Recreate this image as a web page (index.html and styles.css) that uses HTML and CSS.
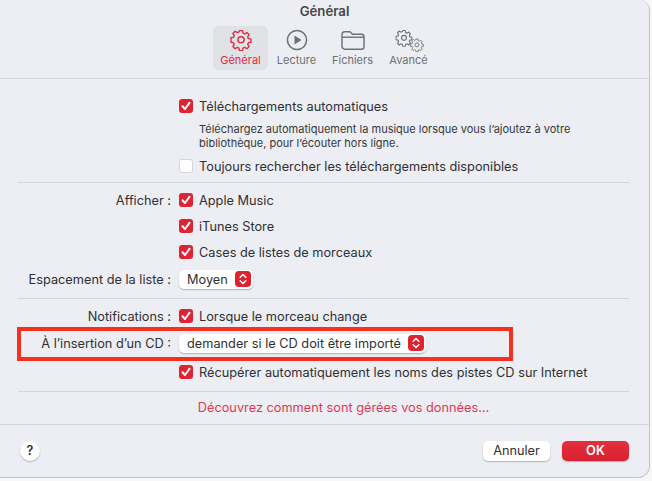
FILE: index.html
```html
<!doctype html>
<html lang="fr">
<head>
<meta charset="utf-8">
<title>Général</title>
<link rel="stylesheet" href="styles.css">
</head>
<body>
<div class="window">
  <h1 class="title">Général</h1>
  <nav class="tabs">
    <div class="tab active">
      <svg width="24" height="24" viewBox="0 0 24 24" fill="none" stroke="currentColor" stroke-width="1.5" stroke-linejoin="round">
        <symbol id="gear" viewBox="0 0 24 24"><path d="M10.300 1.800h3.400l.5 2.800 1.900.8 2.400-1.600 2.400 2.400-1.600 2.400.8 1.900 2.800.5v3.400l-2.800.5-.8 1.900 1.600 2.400-2.400 2.400-2.400-1.600-1.900.8-.5 2.800h-3.400l-.5-2.800-1.900-.8-2.400 1.600-2.400-2.400 1.600-2.400-.8-1.900-2.800-.5V9.600l2.800-.5.8-1.900L3.100 4.800l2.400-2.400 2.400 1.600 1.900-.8z"/><circle cx="12" cy="11.800" r="3.400"/></symbol>
        <use href="#gear" x="1" y="1" width="22" height="22"/>
      </svg>
      <span>Général</span>
    </div>
    <div class="tab">
      <svg width="24" height="24" viewBox="0 0 24 24" fill="none" stroke="currentColor" stroke-width="1.5"><circle cx="12" cy="12" r="9.600"/><path d="M9.500 7.600v8.800l7-4.400z" fill="currentColor" stroke="none"/></svg>
      <span>Lecture</span>
    </div>
    <div class="tab">
      <svg width="26" height="24" viewBox="0 0 26 24" fill="none" stroke="currentColor" stroke-width="1.400" stroke-linejoin="round"><path d="M2 6.500C2 4.600 3 3.700 4.500 3.700h5.500l2.500 2.500h9c1.600 0 2.500 1 2.500 2.500v10c0 1.600-.9 2.500-2.500 2.500h-17C3 20.700 2 19.800 2 18.200z"/><path d="M2 9.200h22"/></svg>
      <span>Fichiers</span>
    </div>
    <div class="tab">
      <svg width="30" height="24" viewBox="0 0 30 24" fill="none" stroke="currentColor" stroke-width="1.500" stroke-linejoin="round">
        <use href="#gear" x="1.250" y="1.250" width="17.500" height="17.500"/>
        <use href="#gear" x="16" y="10" width="14" height="14"/>
      </svg>
      <span>Avancé</span>
    </div>
  </nav>
  <hr class="rule rule-full">

  <section class="group group-top">
    <div class="row">
      <div class="label"></div>
      <label class="check on">Téléchargements automatiques</label>
    </div>
    <div class="row row-desc">
      <div class="label"></div>
      <p class="desc">Téléchargez automatiquement la musique lorsque vous l’ajoutez à votre bibliothèque, pour l’écouter hors ligne.</p>
    </div>
    <div class="row">
      <div class="label"></div>
      <label class="check">Toujours rechercher les téléchargements disponibles</label>
    </div>
  </section>
  <hr class="rule">

  <section class="group group-show">
    <div class="row">
      <div class="label">Afficher :</div>
      <label class="check on">Apple Music</label>
    </div>
    <div class="row">
      <div class="label"></div>
      <label class="check on">iTunes Store</label>
    </div>
    <div class="row">
      <div class="label"></div>
      <label class="check on">Cases de listes de morceaux</label>
    </div>
    <div class="row row-spacing">
      <div class="label">Espacement de la liste :</div>
      <div class="select">Moyen<span class="stepper"><svg width="8" height="12" viewBox="0 0 8 12" fill="none" stroke="#fff" stroke-width="1.500" stroke-linecap="round" stroke-linejoin="round"><path d="M1.200 4.300 4 1.500l2.800 2.800M1.200 7.700 4 10.500l2.800-2.800"/></svg></span></div>
    </div>
  </section>
  <hr class="rule">

  <section class="group group-cd">
    <div class="row">
      <div class="label">Notifications :</div>
      <label class="check on">Lorsque le morceau change</label>
    </div>
    <div class="row row-spacing">
      <div class="label">À l’insertion d’un CD :</div>
      <div class="select">demander si le CD doit être importé<span class="stepper"><svg width="8" height="12" viewBox="0 0 8 12" fill="none" stroke="#fff" stroke-width="1.500" stroke-linecap="round" stroke-linejoin="round"><path d="M1.200 4.300 4 1.500l2.800 2.800M1.200 7.700 4 10.500l2.800-2.800"/></svg></span></div>
    </div>
    <div class="row row-last">
      <div class="label"></div>
      <label class="check on">Récupérer automatiquement les noms des pistes CD sur Internet</label>
    </div>
    <div class="callout"></div>
  </section>
  <hr class="rule">

  <a class="privacy">Découvrez comment sont gérées vos données…</a>
  <hr class="rule rule-full">

  <footer class="actions">
    <div class="help">?</div>
    <div class="buttons">
      <div class="btn">Annuler</div>
      <div class="btn btn-ok">OK</div>
    </div>
  </footer>
</div>
</body>
</html>
```

FILE: styles.css
```css
html, body {
  margin: 0;
  height: 100%;
  background: #f7f7f8;
}
body {
  font-family: Inter, "Liberation Sans", sans-serif;
  font-size: 12.75px;
  color: #2f3034;
  overflow: hidden;
}

.window {
  width: 650px;
  height: 478px;
  box-sizing: border-box;
  background: #eceef3;
  border-right: 1px solid #c4c5c8;
  border-bottom: 1px solid #c4c5c8;
  border-radius: 0 10px 12px 0;
  overflow: hidden;
}

.title {
  margin: 0;
  padding-top: 4px;
  height: 22px;
  box-sizing: border-box;
  font-size: 13.2px;
  font-weight: 600;
  line-height: 15px;
  text-align: center;
  color: #45464a;
}

.tabs {
  display: flex;
  justify-content: center;
  gap: 1px;
  height: 44px;
  margin-top: 4px;
}
.tab {
  width: 55px;
  height: 44px;
  display: flex;
  flex-direction: column;
  align-items: center;
  justify-content: flex-end;
  padding-bottom: 3px;
  box-sizing: border-box;
  border-radius: 5px;
  color: #6f7074;
  font-size: 11px;
  line-height: 13px;
}
.tab svg { margin-bottom: 2px; }
.tab.active {
  background: #e0e2e6;
  color: #dc2c44;
}

.rule {
  margin: 0 20px 0 18px;
  border: 0;
  height: 1px;
  background: #d5d6da;
}
.rule-full {
  margin: 0;
}
.tabs + .rule { margin-top: 8px; }

.group-top { padding: 16px 0 5px; }
.group-show { padding: 4px 0 6px; }
.group-cd { padding: 4px 0 6px; position: relative; }

.row {
  display: flex;
  align-items: center;
  min-height: 26px;
}
.group-top .row { min-height: 22px; }
.group-top .row-desc { margin: 5px 0; min-height: 28px; }
.row-spacing { margin-top: 1px; }
.row-last { margin-top: 3px; }

.label {
  width: 179px;
  flex: none;
  text-align: right;
  padding-right: 8px;
  box-sizing: border-box;
}

.check {
  display: flex;
  align-items: center;
  gap: 6px;
}
.check::before {
  content: "";
  width: 14px;
  height: 14px;
  flex: none;
  box-sizing: border-box;
  border-radius: 3px;
  background: #fff;
  border: 1px solid #d4d5d8;
}
.check.on::before {
  border: 0;
  background: #dd2334 url("data:image/svg+xml,%3Csvg xmlns='http://www.w3.org/2000/svg' viewBox='0 0 14 14'%3E%3Cpath d='M3.500 7.300 6 10l4.600-6.300' fill='none' stroke='white' stroke-width='2' stroke-linecap='round' stroke-linejoin='round'/%3E%3C/svg%3E");
}

.desc {
  margin: 0 0 0 20px;
  width: 400px;
  font-size: 11px;
  line-height: 14px;
  color: #36373b;
}

.select {
  display: flex;
  align-items: center;
  justify-content: space-between;
  gap: 7px;
  height: 19px;
  padding: 0 2px 0 8px;
  background: #fff;
  border-radius: 5px;
  box-shadow: 0 1px 1.500px rgba(0, 0, 0, .25);
}
.stepper {
  width: 16px;
  height: 16px;
  display: flex;
  align-items: center;
  justify-content: center;
  border-radius: 4px;
  background: #dc2433;
}

.callout {
  position: absolute;
  left: 17px;
  top: 28px;
  width: 488px;
  height: 26px;
  border: 4px solid #f5301f;
}

.privacy {
  display: block;
  text-align: center;
  height: 32px;
  line-height: 32px;
  padding-left: 38px;
  color: #dc3a52;
}

.actions {
  display: flex;
  align-items: center;
  justify-content: space-between;
  padding: 16px 20px 0 20px;
}
.help {
  width: 20px;
  height: 20px;
  border-radius: 50%;
  background: #fff;
  box-shadow: 0 1px 1.500px rgba(0, 0, 0, .25);
  text-align: center;
  line-height: 20px;
  font-weight: 600;
  font-size: 12.5px;
}
.buttons {
  display: flex;
  gap: 12px;
}
.btn {
  width: 67px;
  height: 20px;
  border-radius: 5px;
  background: #fff;
  box-shadow: 0 1px 1.500px rgba(0, 0, 0, .25);
  text-align: center;
  line-height: 20px;
}
.btn-ok {
  background: linear-gradient(#e4303f, #d91f2f);
  color: #fff;
  font-weight: 600;
}
```
